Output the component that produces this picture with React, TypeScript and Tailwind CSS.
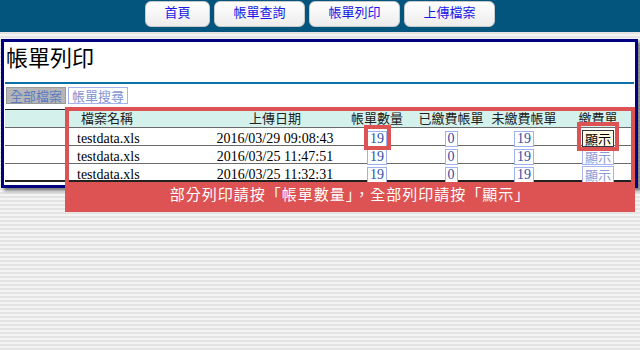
import React from "react";

const cjk = "font-['Noto_Sans_CJK_TC',sans-serif]";
const serif = "font-['Liberation_Serif','Noto_Sans_CJK_TC',serif]";

const navItems = ["首頁", "帳單查詢", "帳單列印", "上傳檔案"];

interface Bill {
  file: string;
  date: string;
  total: number;
  paid: number;
  unpaid: number;
}

const bills: Bill[] = [
  { file: "testdata.xls", date: "2016/03/29 09:08:43", total: 19, paid: 0, unpaid: 19 },
  { file: "testdata.xls", date: "2016/03/25 11:47:51", total: 19, paid: 0, unpaid: 19 },
  { file: "testdata.xls", date: "2016/03/25 11:32:31", total: 19, paid: 0, unpaid: 19 },
];

const cols = "grid grid-cols-[65px_142px_126px_78px_70px_76px_72px]";

function NumBox({ n }: { n: number }) {
  return (
    <span className={`inline-block h-[16px] px-[2px] border border-[#9fb1ef] bg-white text-[14px] leading-[14px] text-[#2f4fa8] ${serif}`}>
      {n}
    </span>
  );
}

export default function App() {
  return (
    <div className="relative w-[640px] h-[350px] overflow-hidden bg-[repeating-linear-gradient(to_bottom,#e4e4e4_0px,#e4e4e4_2px,#f3f3f3_2px,#f3f3f3_4px)]">
      {/* top nav */}
      <div className="h-[32px] bg-[#03557e] flex justify-center gap-[4px] pt-[1px]">
        {navItems.map((item, i) => (
          <div
            key={item}
            className={`${i === 0 ? "w-[65px]" : "w-[91px]"} h-[26px] rounded-[6px] border border-[#c9c9c9] bg-[linear-gradient(to_bottom,#ffffff,#ececec)] flex items-center justify-center pb-[4px] text-[13px] text-[#1818e6] ${cjk}`}
          >
            {item}
          </div>
        ))}
      </div>

      <div className="h-[7px]" />

      {/* main panel */}
      <div className="ml-[1px] w-[637px] h-[149px] border-[3px] border-[#000080] bg-white shadow-[3px_3px_3px_rgba(0,0,0,0.45)]">
        <div className={`h-[40px] pl-[2px] text-[22px] leading-[28px] text-black ${cjk}`}>帳單列印</div>
        <div className="mx-[1px] h-[2px] bg-[#0a72a6]" />
        <div className={`mt-[3px] ml-[2px] flex gap-[2px] text-[13px] leading-[15px] ${cjk}`}>
          <span className="h-[17px] px-[3px] border border-[#9a9a9a] bg-[#b6b6b6] text-[#5b7cc4]">全部檔案</span>
          <span className="h-[17px] px-[3px] border border-[#a3b3ef] bg-white text-[#7f93d3]">帳單搜尋</span>
        </div>

        {/* table */}
        <div className="mt-[5px] mx-[1px] border-t border-[#222]">
          <div className={`${cols} h-[18px] bg-[#d4f1ec] border-b border-[#6a6a6a] text-[13px] leading-[16px] text-[#222] ${cjk}`}>
            <div />
            <div className="pl-[11px]">檔案名稱</div>
            <div className="text-center">上傳日期</div>
            <div className="text-center">帳單數量</div>
            <div className="text-center">已繳費帳單</div>
            <div className="text-center">未繳費帳單</div>
            <div className="text-center">繳費單</div>
          </div>
          {bills.map((b, i) => (
            <div
              key={b.date}
              className={`${cols} h-[18px] items-center text-[14px] text-black ${serif} ${i < 2 ? "border-b border-[#6a6a6a]" : "border-b-2 border-[#222]"}`}
            >
              <div />
              <div className="pl-[7px]">{b.file}</div>
              <div className="text-center">{b.date}</div>
              <div className="flex justify-center"><NumBox n={b.total} /></div>
              <div className="flex justify-center"><NumBox n={b.paid} /></div>
              <div className="flex justify-center"><NumBox n={b.unpaid} /></div>
              <div className="flex justify-center">
                <span
                  className={`h-[17px] px-[2px] border text-[13px] leading-[15px] ${cjk} ${
                    i === 0 ? "border-[#333344] bg-[#fffbe2] text-black" : "border-[#a6b4ee] bg-white text-[#8a9ad6]"
                  }`}
                >
                  顯示
                </span>
              </div>
            </div>
          ))}
        </div>
      </div>

      {/* annotation overlay */}
      <div className="absolute left-[65px] top-[107px] w-[570px] h-[105px] border-4 border-[#dd5252] flex flex-col">
        <div className="flex-1" />
        <div className={`h-[26px] bg-[#dd5252] flex items-center justify-center pb-[1px] text-[15px] tracking-[1px] text-white ${cjk}`}>
          部分列印請按「帳單數量」，全部列印請按「顯示」
        </div>
      </div>
      <div className="absolute left-[364px] top-[125px] w-[27px] h-[25px] border-4 border-[#dd5252]" />
      <div className="absolute left-[577px] top-[122px] w-[42px] h-[29px] border-4 border-[#dd5252]" />
    </div>
  );
}
